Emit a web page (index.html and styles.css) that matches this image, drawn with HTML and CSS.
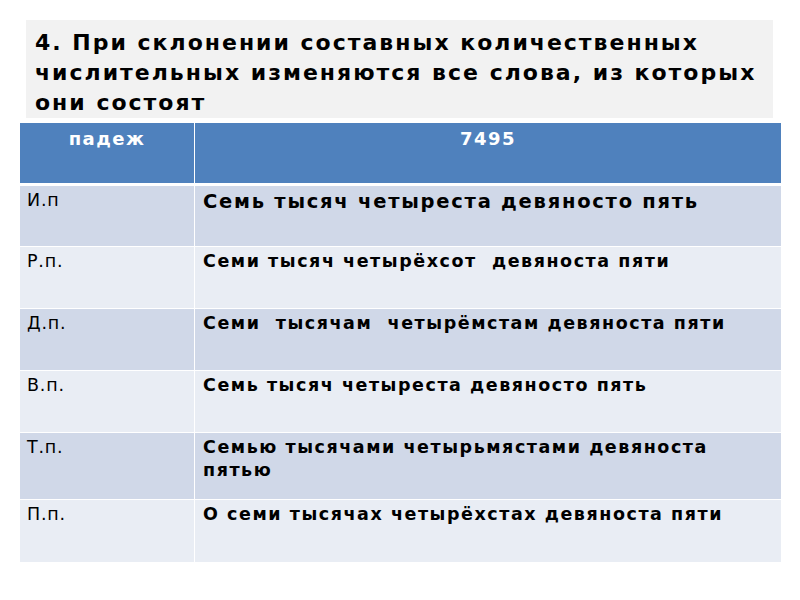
FILE: index.html
```html
<!DOCTYPE html>
<html lang="ru">
<head>
<meta charset="utf-8">
<link rel="stylesheet" href="styles.css">
</head>
<body>
<div class="slide">
  <div class="title">4. При склонении составных количественных числительных изменяются все слова, из которых они состоят</div>
  <table class="grid">
    <colgroup><col class="c1"><col class="c2"></colgroup>
    <thead>
      <tr><th>падеж</th><th>7495</th></tr>
    </thead>
    <tbody>
      <tr class="odd r1"><td>И.п</td><td class="big">Семь тысяч четыреста девяносто пять</td></tr>
      <tr class="even"><td>Р.п.</td><td>Семи тысяч четырёхсот&nbsp; девяноста пяти</td></tr>
      <tr class="odd"><td>Д.п.</td><td>Семи&nbsp; тысячам&nbsp; четырёмстам девяноста пяти</td></tr>
      <tr class="even"><td>В.п.</td><td>Семь тысяч четыреста девяносто пять</td></tr>
      <tr class="odd r5"><td>Т.п.</td><td>Семью тысячами четырьмястами девяноста пятью</td></tr>
      <tr class="even last"><td>П.п.</td><td>О семи тысячах четырёхстах девяноста пяти</td></tr>
    </tbody>
  </table>
</div>
</body>
</html>
```
FILE: styles.css
```css
html, body { margin: 0; padding: 0; background: #fff; }
body { width: 800px; height: 600px; overflow: hidden; font-family: "DejaVu Sans", sans-serif; }
.slide { padding: 20px 0 0 20px; }
.title {
  margin-left: 6px;
  width: 747px;
  height: 98px;
  box-sizing: border-box;
  background: #f2f2f2;
  padding: 8px 0 0 9px;
  font-weight: bold;
  font-size: 22px;
  line-height: 30px;
  letter-spacing: 2px;
  color: #000;
}
.grid {
  margin-top: 5px;
  width: 761px;
  border-collapse: separate;
  border-spacing: 0;
  table-layout: fixed;
}
.c1 { width: 175px; }
.grid th, .grid td {
  vertical-align: top;
  text-align: left;
  box-sizing: border-box;
  padding: 0;
}
.grid th:first-child, .grid td:first-child { border-right: 1px solid #fff; }
.grid th {
  background: #4f81bd;
  color: #fff;
  text-align: center;
  font-size: 18px;
  line-height: 21px;
  height: 63px;
  padding-top: 5px;
  border-bottom: 3px solid #fff;
  letter-spacing: 1.5px;
}
.grid td {
  height: 62px;
  padding: 3px 8px 0 8px;
  border-bottom: 1px solid #fff;
  font-size: 17.5px;
  line-height: 23px;
  color: #000;
}
.grid td:first-child { padding-left: 7px; letter-spacing: 0.8px; }
.grid td + td { font-weight: bold; letter-spacing: 1.55px; }
.grid td.big { font-size: 19.5px; line-height: 24px; letter-spacing: 1.75px; padding-top: 4px; }
.grid .r1 td { height: 61px; }
.grid .r5 td { height: 67px; }
.grid .last td { border-bottom: none; }
.odd td { background: #d0d8e8; }
.even td { background: #e9edf4; }
```
